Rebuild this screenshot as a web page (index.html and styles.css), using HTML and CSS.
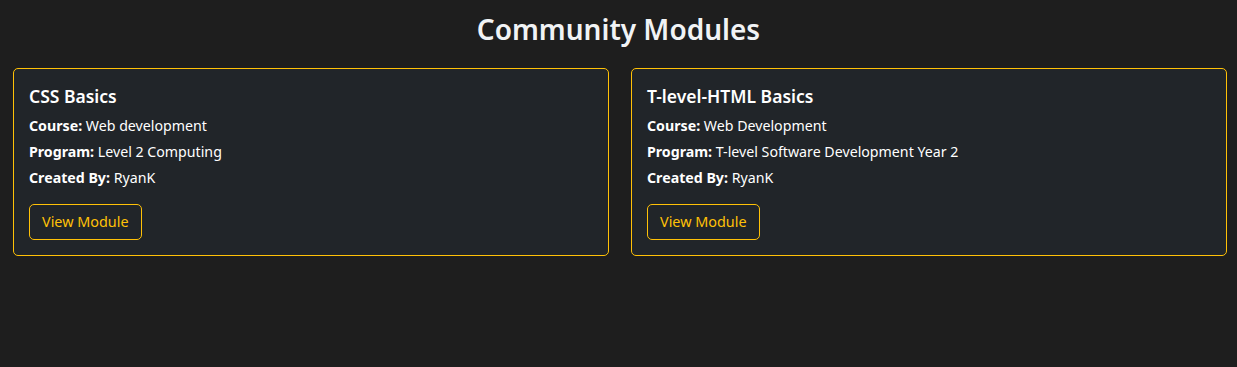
FILE: index.html
```html
<!DOCTYPE html>
<html lang="en">
<head>
  <meta charset="UTF-8" />
  <meta name="viewport" content="width=device-width, initial-scale=1.0" />
  <title>Community Modules</title>
  <link rel="stylesheet" href="styles.css">
</head>
<body>
  <h2 class="page-title">Community Modules</h2>

  <div class="module-grid">
    <div class="module-card">
      <h5 class="module-title">CSS Basics</h5>
      <p><strong>Course:</strong> Web development</p>
      <p><strong>Program:</strong> Level 2 Computing</p>
      <p><strong>Created By:</strong> RyanK</p>
      <a href="#" class="view-button">View Module</a>
    </div>

    <div class="module-card">
      <h5 class="module-title">T-level-HTML Basics</h5>
      <p><strong>Course:</strong> Web Development</p>
      <p><strong>Program:</strong> T-level Software Development Year 2</p>
      <p><strong>Created By:</strong> RyanK</p>
      <a href="#" class="view-button">View Module</a>
    </div>
  </div>
</body>
</html>
```

FILE: styles.css
```css
body {
  margin: 0;
  font-family: "Noto Sans", "Open Sans", sans-serif;
  background: #1e1e1e;
  color: #ffffff;
}
.page-title {
  margin: 0;
  padding-top: 10px;
  text-align: center;
  font-size: 28px;
  font-weight: 600;
  line-height: 38px;
  color: #f1f3f5;
}
.module-grid {
  display: grid;
  grid-template-columns: 1fr 1fr;
  gap: 22px;
  padding: 20px 10px 0 13px;
}
.module-card {
  background: #212529;
  border: 1px solid #ffc107;
  border-radius: 5px;
  padding: 16px 15px 15px 15px;
}
.module-title {
  margin: 0 0 8px 0;
  font-size: 17.5px;
  font-weight: 600;
  line-height: 22px;
}
.module-card p {
  margin: 0 0 4px 0;
  font-size: 14.2px;
  line-height: 22px;
}
.module-card p strong {
  font-weight: 700;
}
.view-button {
  display: inline-block;
  margin-top: 11px;
  padding: 6px 12px;
  border: 1px solid #ffc107;
  border-radius: 5px;
  color: #ffc107;
  font-size: 14.4px;
  line-height: 22px;
  text-decoration: none;
}
```
